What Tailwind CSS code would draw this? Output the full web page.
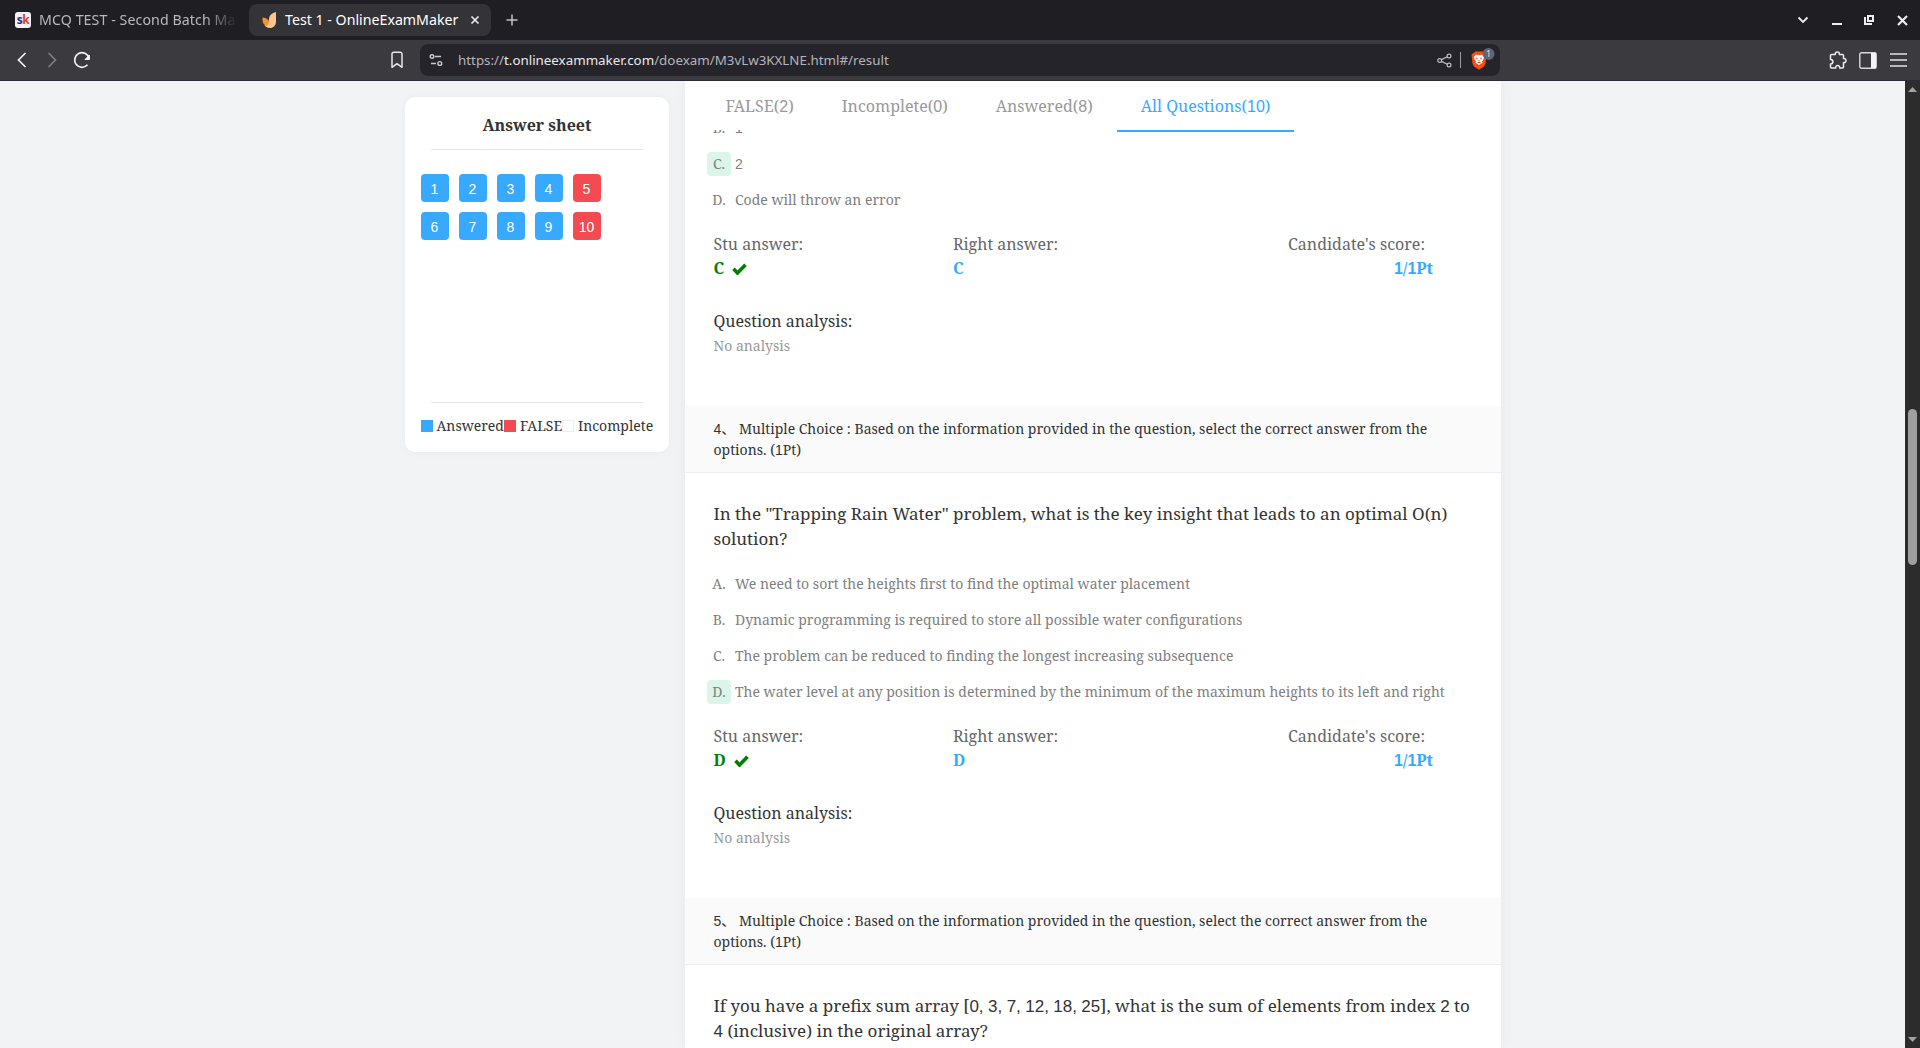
<!DOCTYPE html>
<html lang="en">
<head>
<meta charset="utf-8">
<title>Test 1 - OnlineExamMaker</title>
<script src="https://cdn.jsdelivr.net/npm/@tailwindcss/browser@4"></script>
</head>
<body class="w-[1920px] h-[1048px] overflow-hidden bg-[#f1f3f5] font-['Noto_Serif','Noto_Sans_CJK_SC',serif] text-[#333]">
<div class="flex flex-col h-[1048px]">

  <!-- Tab strip -->
  <div class="flex items-center h-10 shrink-0 bg-[#1f1e23] font-['Noto_Sans',sans-serif] text-[14.200px] leading-5 pr-3">
    <div class="flex items-center w-[249px] h-8 pl-[15px] pr-3 shrink-0">
      <div class="w-4 h-4 shrink-0 rounded-[3px] bg-[#f4f4f8] flex items-center justify-center font-['Open_Sans',sans-serif] font-bold text-[12px] leading-none tracking-[-0.5px]"><span class="text-[#2b2a8c]">s</span><span class="text-[#e23b2e]">k</span></div>
      <div class="ml-2 w-[198px] pb-px shrink-0 overflow-hidden whitespace-nowrap tracking-[0.08px] text-[#b9b9bd] [mask-image:linear-gradient(to_right,black_84%,transparent_100%)]">MCQ TEST - Second Batch Maang</div>
    </div>
    <div class="flex items-center w-[242px] h-8 shrink-0 rounded-[8px] bg-[#343338] pl-3 text-white">
      <svg class="w-4 h-4 shrink-0" viewBox="0 0 16 16"><path d="M15 0v9.500c0 4-2.500 6.500-6 6.500-2.500 0-4.500-1-5.500-3C6 12 8 10 8 7.500 8 3.500 11 .8 15 0z" fill="#fdc68c"/><path d="M1.500 5.500c3.500.2 6.300 2 6.300 4.500 0 2-1 3.400-2.600 4C2.700 12.500 1.500 10.500 1.500 8z" fill="#f9922b"/></svg>
      <span class="ml-2 w-[175px] pb-px whitespace-nowrap">Test 1 - OnlineExamMaker</span>
      <svg class="ml-[10px] w-[10px] h-[10px] shrink-0" viewBox="0 0 10 10"><path d="M1.500 1.500l7 7M8.500 1.500l-7 7" stroke="#eee" stroke-width="1.600"/></svg>
    </div>
    <svg class="ml-[15px] w-3 h-3" viewBox="0 0 12 12"><path d="M6 .5v11M.5 6h11" stroke="#c4c4c8" stroke-width="1.500"/></svg>
    <div class="ml-auto flex items-center">
      <svg class="w-3 h-3 mr-[23px]" viewBox="0 0 12 12"><path d="M1.500 3.500L6 8l4.500-4.500" fill="none" stroke="#eee" stroke-width="1.800"/></svg>
      <svg class="w-[10px] h-[10px] mr-[22px]" viewBox="0 0 10 10"><path d="M0 8h10v2H0z" fill="#eee"/></svg>
      <svg class="w-[10px] h-[10px] mr-[23px]" viewBox="0 0 10 10"><path d="M4 1h5v5H4zM1 2v7h7" fill="none" stroke="#eee" stroke-width="2"/></svg>
      <svg class="w-[11px] h-[11px]" viewBox="0 0 11 11"><path d="M1 1l9 9M10 1l-9 9" stroke="#eee" stroke-width="2.200"/></svg>
    </div>
  </div>

  <!-- Toolbar -->
  <div class="flex items-center h-[41px] shrink-0 bg-[#3b3a3f] border-b border-[#2d2b35] font-['Noto_Sans',sans-serif] pl-4 pr-[12px]">
    <svg class="w-3 h-4" viewBox="0 0 12 16"><path d="M9.500 1L2.500 8l7 7" fill="none" stroke="#f2f2f4" stroke-width="1.700"/></svg>
    <svg class="w-3 h-4 ml-[18px]" viewBox="0 0 12 16"><path d="M2.500 1l7 7-7 7" fill="none" stroke="#7d7c82" stroke-width="1.700"/></svg>
    <svg class="w-[18px] h-[18px] ml-[15px]" viewBox="0 0 18 18"><path d="M14.500 13.800A7.300 7.300 0 1 1 16 7" fill="none" stroke="#f2f2f4" stroke-width="1.700"/><path d="M16.500 4v4.500H12z" fill="#f2f2f4" stroke="#f2f2f4" stroke-linejoin="round"/></svg>
    <svg class="w-3 h-[18px] ml-[300px]" viewBox="0 0 12 18"><path d="M1 3a1.800 1.800 0 0 1 1.800-1.800h6.400A1.800 1.800 0 0 1 11 3v13.300l-5-3.600-5 3.600z" fill="none" stroke="#e8e8ea" stroke-width="1.500" stroke-linejoin="round"/></svg>
    <div class="ml-[17px] w-[1080px] h-8 shrink-0 rounded-[8px] bg-[#25242a] flex items-center pl-[9px] pr-[3px]">
      <svg class="w-[14px] h-[14px]" viewBox="0 0 14 14" fill="none" stroke="#c9c9ce" stroke-width="1.400"><circle cx="3" cy="3.500" r="1.800"/><path d="M6 3.500h6M2 10.500h5"/><circle cx="10.800" cy="10.500" r="1.900"/></svg>
      <div class="ml-[15px] pt-px text-[13.350px] text-[#b4b4b9] whitespace-nowrap">https://<span class="text-[#e9e9ec]">t.onlineexammaker.com</span>/doexam/M3vLw3KXLNE.html#/result</div>
      <svg class="ml-auto w-[15px] h-[15px]" viewBox="0 0 15 15" fill="none" stroke="#bcbcc2" stroke-width="1.200"><circle cx="2.700" cy="7.500" r="1.900"/><circle cx="12" cy="3" r="1.900"/><circle cx="12" cy="12" r="1.900"/><path d="M4.500 6.600l5.800-2.800M4.500 8.400l5.800 2.800"/></svg>
      <div class="w-px h-4 bg-[#9a9aa0] ml-2"></div>
      <svg class="ml-[10px] w-[26px] h-[24px]" viewBox="0 0 26 24"><path d="M4.500 3.500h8l3 3-1 9-1.500 3-5 3.200-5-3.200-1.500-3-1-9z" fill="#fb4b10"/><path d="M5 6.500l3 .7 3-.7 2.200 2.500-1 3-1.200 1.200.5 1.600L8 17l-3.500-2.200.5-1.600L3.800 12l-1-3z" fill="#fff"/><path d="M5 10l1.800.8M11 10l-1.800.8M8 12v1.500M6.500 14.500h3" stroke="#fb4b10"/><circle cx="17.500" cy="6" r="6" fill="#626472"/><text x="17.500" y="9.300" text-anchor="middle" font-size="9" fill="#dcdce2" font-family="Noto Sans">1</text></svg>
    </div>
    <div class="ml-auto flex items-center gap-3">
      <svg class="w-[18px] h-[18px]" viewBox="0 0 18 18"><path d="M2.500 3.500h3.800C6 1.800 7 1 8.300 1s2.300.8 2 2.500h3.200a1 1 0 0 1 1 1v3c1.700-.2 2.500.8 2.500 2.100s-.8 2.200-2.500 2V16a1 1 0 0 1-1 1h-2.800c.1-1.700-.7-2.500-2-2.500s-2.100.8-2 2.500H2.500a1 1 0 0 1-1-1v-3c1.600 0 2.400-.9 2.400-2.200S3.100 8.500 1.500 8.500v-4a1 1 0 0 1 1-1z" fill="none" stroke="#ececee" stroke-width="1.500" stroke-linejoin="round"/></svg>
      <svg class="w-[18px] h-[17px]" viewBox="0 0 18 17"><rect x=".8" y=".8" width="16.400" height="15.400" rx="1.500" fill="none" stroke="#d9d9db" stroke-width="1.400"/><path d="M12 1h5v15h-5z" fill="#f3f3f5"/></svg>
      <svg class="w-[19px] h-[14px]" viewBox="0 0 19 14"><path d="M1 1h17M1 7h17M1 13h17" stroke="#e3e3e5" stroke-width="1.500"/></svg>
    </div>
  </div>

  <!-- Page -->
  <div class="flex flex-1 min-h-0">
    <div class="flex w-[1905px] pl-[405px] gap-4 overflow-hidden">

      <!-- Answer sheet -->
      <div class="mt-4 w-[264px] h-[355px] bg-white rounded-[10px] shadow-[0_0_10px_rgba(0,0,80,0.04)] flex flex-col px-4 shrink-0">
        <div class="mx-[10px] h-[53px] shrink-0 border-b border-[#e4e4e6] pt-4 text-center font-bold text-[16px] leading-6">Answer sheet</div>
        <div id="sheet" class="grid grid-cols-[repeat(5,28px)] gap-[10px] mt-6 font-['Liberation_Sans',sans-serif] text-[14px] text-white"></div>
        <div class="mx-[10px] mt-auto border-b border-[#e4e4e6]"></div>
        <div class="flex h-[49px] pt-[17px] shrink-0 text-[14px] leading-3 whitespace-nowrap">
          <i class="w-3 h-3 bg-[#37a9ff] shrink-0"></i><span class="w-[71px] pl-[3.500px] shrink-0">Answered</span>
          <i class="w-3 h-3 bg-[#f34b51] shrink-0"></i><span class="w-[46px] pl-[4px] shrink-0">FALSE</span>
          <i class="w-3 h-3 border border-[#eee] shrink-0"></i><span class="pl-[4px]">Incomplete</span>
        </div>
      </div>

      <!-- Results -->
      <div class="w-[816px] bg-white shrink-0 shadow-[0_0_14px_rgba(0,0,60,0.05)] flex flex-col">
        <div class="flex h-[49px] shrink-0 pl-[16.500px] text-[16px] text-[#999] whitespace-nowrap relative z-10">
          <div class="px-6 pt-[13px] leading-6 h-[51px]" data-t>FALSE(2)</div>
          <div class="px-6 pt-[13px] leading-6 h-[51px]" data-t>Incomplete(0)</div>
          <div class="px-6 pt-[13px] leading-6 h-[51px]" data-t>Answered(8)</div>
          <div class="px-6 pt-[13px] leading-6 h-[51px] border-b-2 border-[#37a9ff] text-[#37a9ff]" data-t>All Questions(10)</div>
        </div>
        <div class="flex-1 min-h-0 overflow-hidden">
          <div id="list" class="-mt-[14px]"></div>
        </div>
      </div>
    </div>

    <!-- Scrollbar -->
    <div class="w-[15px] bg-[#2c2c2c] flex flex-col items-center pb-[6px]">
      <svg class="w-[9px] h-[5px] mt-[6px]" viewBox="0 0 9 5"><path d="M4.500 0L9 5H0z" fill="#a3a3a3"/></svg>
      <div class="mt-[317px] w-[9px] h-[156px] rounded-full bg-[#9f9f9f]"></div>
      <svg class="w-[9px] h-[5px] mt-auto" viewBox="0 0 9 5"><path d="M4.500 5L0 0h9z" fill="#a3a3a3"/></svg>
    </div>
  </div>
</div>

<script>
// Digits (and the commas of number lists) are set in the sans face, the rest in the serif one.
const num = s => s.replace(/\d+,?/g, d => `<span class="font-['Liberation_Sans',sans-serif]">${d}</span>`);
document.querySelectorAll('[data-t]').forEach(e => e.innerHTML = num(e.textContent));

document.getElementById('sheet').innerHTML = [1,2,3,4,5,6,7,8,9,10].map(n =>
  `<div class="h-7 rounded-[4px] flex items-center justify-center pt-[3px] pr-px ${n % 5 ? 'bg-[#37a9ff]' : 'bg-[#f34b51]'}">${n}</div>`).join('');

const options = (opts, right) => `<div class="flex flex-col gap-3 pl-[22px] text-[14px] leading-6 text-[#808080] whitespace-nowrap">${opts.map(([k, t]) =>
  `<div class="flex h-6"><span class="w-6 h-6 rounded-[4px] text-center ${k === right ? 'bg-[#dbf5ea]' : ''}">${k}.</span><span class="ml-1">${num(t)}</span></div>`).join('')}</div>`;

const result = a => `
  <div class="mt-5 ml-[28.500px] h-12 grid grid-cols-[239.500px_240px_240px] text-[16px] leading-6 text-[#666]">
    <div>Stu answer:<div class="flex items-center h-6 font-bold text-[#008000]">${a}<svg class="ml-[8px] mt-px w-[15px] h-[12px]" viewBox="0 0 15 12"><path d="M1.500 5.800l4 4.200L13.500 1.800" fill="none" stroke="#008000" stroke-width="3.600"/></svg></div></div>
    <div>Right answer:<div class="h-6 font-bold text-[#37a9ff]">${a}</div></div>
    <div class="text-right"><span class="mr-2">Candidate's score:</span><div class="h-6 font-bold text-[#37a9ff]">${num('1/1Pt')}</div></div>
  </div>
  <div class="mt-[29px] ml-[28.500px] text-[16px] leading-6">Question analysis:</div>
  <div class="mt-px ml-[28.500px] h-[72px] text-[14px] leading-6 text-[#999]">No analysis</div>`;

const heading = (n, q) => `
  <div class="h-[67px] pt-[12px] pl-[28.500px] bg-[#fafafa] border-b border-[#eeeff0] text-[14px] leading-[21px] whitespace-nowrap">
    <div class="h-[21px]">${num(n + '、')} Multiple Choice : Based on the information provided in the question, select the correct answer from the</div>
    <div class="h-[21px]">options. (${num('1')}Pt)</div>
  </div>
  <div class="pt-[28px] pl-[28.500px] text-[17px] leading-[25px] h-[99px] whitespace-nowrap">${q.map(l => `<div class="h-[25px]">${num(l)}</div>`).join('')}</div>`;

document.getElementById('list').innerHTML =
  options([['B', '1'], ['C', '2'], ['D', 'Code will throw an error']], 'C') + result('C') +
  heading(4, ['In the "Trapping Rain Water" problem, what is the key insight that leads to an optimal O(n)', 'solution?']) +
  options([['A', 'We need to sort the heights first to find the optimal water placement'],
    ['B', 'Dynamic programming is required to store all possible water configurations'],
    ['C', 'The problem can be reduced to finding the longest increasing subsequence'],
    ['D', 'The water level at any position is determined by the minimum of the maximum heights to its left and right']], 'D') + result('D') +
  heading(5, ['If you have a prefix sum array [0, 3, 7, 12, 18, 25], what is the sum of elements from index 2 to', '4 (inclusive) in the original array?']);
</script>
</body>
</html>
